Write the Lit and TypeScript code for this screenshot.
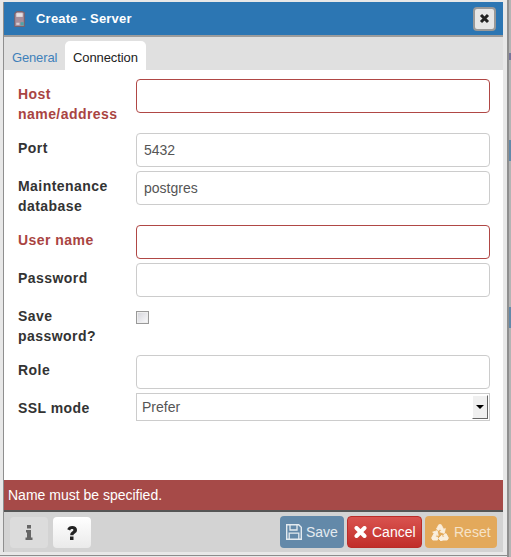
import { LitElement, html, css, svg } from "lit";
import { customElement } from "lit/decorators.js";

const RECYCLE_PART = svg`<path d="M-1.150 -9H1.150L3.750 -4.500 5.310 -5.400 4.290 -.770 -.230 -2.200 1.330 -3.100 0 -5.400 -1.080 -3.540 -3.500 -4.940Z"/>`;

@customElement("app-root")
export class AppRoot extends LitElement {
  static styles = css`
    :host { display: block; width: 511px; height: 557px; overflow: hidden; background: #e8e8e8; font-family: "Liberation Sans", Arial, sans-serif; }
    * { box-sizing: border-box; }
    .page { display: flex; height: 557px; }
    .shell { width: 507px; height: 556px; flex: none; padding: 2px 4px 3px 3px; border-bottom: 1px solid #8c8c8c; }
    .rail { width: 4px; height: 557px; flex: none; border-left: 2px solid #8f8f8f; background: #b4b4b4; display: flex; flex-direction: column; }
    .bit { flex: none; width: 2px; background: #6389a9; }
    .bit.p { background: #76769a; height: 7px; margin-top: 53px; }
    .bit.a { height: 21px; margin-top: 80px; }
    .bit.b { height: 21px; margin-top: 146px; }
    .dialog { width: 500px; height: 550px; border-left: 1px solid #8f8f8f; background: #fff; display: flex; flex-direction: column; }
    .head { height: 35px; flex: none; background: #2c76b3; border-bottom: 2px solid #9c9c9c; display: flex; align-items: center; padding: 0 7px 0 10px; color: #fff; font-weight: 700; font-size: 13px; letter-spacing: .22px; }
    .head svg { margin-right: 12px; flex: none; }
    .head span { flex: 1; }
    .close { width: 23px; height: 24px; border: 2px solid #999; border-radius: 4px; background: #e6e6e6; display: flex; align-items: center; justify-content: center; }
    .close svg { margin: 0; }
    .tabs { height: 33px; flex: none; background: #e0e0e0; display: flex; align-items: flex-end; padding-left: 1px; font-size: 13px; }
    .tab { height: 29px; width: 60px; padding: 3px 0 0 7px; display: flex; align-items: center; color: #3f80ba; letter-spacing: -.15px; }
    .tab.on { background: #fff; color: #222; border-radius: 5px 5px 0 0; padding-left: 8px; width: 81px; letter-spacing: -.1px; }
    .form { flex: 1; padding: 9px 13px 0 14px; display: flex; flex-direction: column; gap: 4px; }
    .row { display: grid; grid-template-columns: 118px 354px; min-height: 34px; }
    .lab { font-size: 14px; line-height: 20px; font-weight: 700; letter-spacing: .45px; color: #333; padding: 5px 12px 5px 0; }
    .req .lab { color: #a94442; }
    .inp { height: 34px; border: 1px solid #ccc; border-radius: 4px; font-size: 14px; color: #555; padding: 0 7px; display: flex; align-items: center; background: #fff; }
    .req .inp { border-color: #b04745; }
    .chk { width: 13px; height: 13px; margin-top: 10px; border: 1px solid #999; background: linear-gradient(135deg, #d4d4da, #fbfbfd); box-shadow: inset 0 0 0 1px #eee; }
    .select { height: 28px; border: 1px solid #ccc; display: flex; align-items: center; justify-content: space-between; font-size: 14px; color: #555; padding: 0 1px 0 5px; }
    .arrow { width: 16px; height: 24px; background: #f0f0f0; border: 1px solid; border-color: #fff #666 #666 #fff; display: flex; align-items: center; justify-content: center; }
    .tri { width: 0; height: 0; border: 4px solid transparent; border-top-color: #000; border-bottom: 0; }
    .err { height: 30px; flex: none; background: #a64a48; color: #fff; font-size: 14px; display: flex; align-items: center; padding-left: 4px; }
    .foot { height: 42px; flex: none; background: #d3d3d3; border-top: 2px solid #555; padding: 4px 6px 0 6px; display: flex; gap: 3px; font-size: 14px; }
    .sp { flex: 1; }
    .ib { width: 38px; height: 31px; margin-top: 1px; border-radius: 4px; background: linear-gradient(#fff, #eaeaea); display: flex; align-items: center; justify-content: center; }
    .ib.dis { background: #dcdcdc; margin-right: 2px; }
    .btn { height: 32px; border-radius: 4px; color: #fff; display: flex; align-items: center; padding-left: 6px; gap: 4px; }
    .save { width: 64px; background: #6389a9; color: #e4ebf0; }
    .cancel { width: 75px; background: linear-gradient(#d9534f, #c12e2a); border: 1px solid #b92c28; gap: 5px; }
    .reset { width: 72px; background: #e3a95b; color: #f6e3c8; gap: 5px; }
    .btn svg { flex: none; }
  `;

  private row(label: string, value = "", cls = "") {
    return html`<div class="row ${cls}"><div class="lab">${label}</div><div class="inp">${value}</div></div>`;
  }

  render() {
    return html`<div class="page">
      <div class="shell"><div class="dialog">
        <div class="head">
          <svg width="11" height="16" viewBox="0 0 10 15"><path d="M.5 2.500l2-2h5l2 1v13h-9z" fill="#a98f9c" stroke="#75626d"/><rect x="2" y="2" width="6" height="3.500" fill="#e6e0e3"/><rect x="6" y="10.500" width="3" height="3" fill="#4fa3a8"/><rect x="2" y="11" width="3" height="2" fill="#d9cfd4"/></svg>
          <span style="margin-left:-1px">Create - Server</span>
          <div class="close"><svg width="11" height="11" viewBox="0 0 11 11"><path d="M2 2l7 7m0-7l-7 7" stroke="#222" stroke-width="3"/></svg></div>
        </div>
        <div class="tabs"><div class="tab">General</div><div class="tab on">Connection</div></div>
        <div class="form">
          ${this.row("Host name/address", "", "req")}
          ${this.row("Port", "5432")}
          ${this.row("Maintenance database", "postgres")}
          ${this.row("User name", "", "req")}
          ${this.row("Password")}
          <div class="row"><div class="lab">Save password?</div><div><div class="chk"></div></div></div>
          ${this.row("Role")}
          <div class="row"><div class="lab">SSL mode</div><div class="select">Prefer<div class="arrow"><div class="tri"></div></div></div></div>
        </div>
        <div class="err">Name must be specified.</div>
        <div class="foot">
          <div class="ib dis"><svg width="8" height="15" viewBox="0 0 8 15"><path d="M2 0h4v3.500H2zM1 5h5v7.500h1.500V15H.5v-2.500H2V7.500H1z" fill="#666"/></svg></div>
          <div class="ib"><svg width="10" height="14" viewBox="0 0 10 14"><path d="M3 10.500h3.500V14H3zM.2 3.300C1 1.200 2.800 0 5.200 0 8 0 10 1.600 10 3.900c0 1.800-1 2.700-2.200 3.500-.9.600-1.300 1-1.300 1.900H3.200c0-1.900.7-2.800 2-3.700.8-.5 1.200-.9 1.200-1.500s-.5-1-1.300-1c-.9 0-1.500.5-2 1.400z" fill="#222"/></svg></div>
          <div class="sp"></div>
          <div class="btn save"><svg width="16" height="16" viewBox="0 0 16 16"><path d="M.7.700h12l2.600 2.600v12H.7z" fill="none" stroke="#e4ebf0" stroke-width="1.400"/><path d="M4 1v5h7V1M3.200 15V9.200h9.600V15" fill="none" stroke="#e4ebf0" stroke-width="1.300"/></svg>Save</div>
          <div class="btn cancel"><svg width="13" height="12" viewBox="0 0 13 12"><path d="M2.500 2l8 8m0-8l-8 8" stroke="#fff" stroke-width="4" stroke-linecap="round"/></svg>Cancel</div>
          <div class="btn reset"><svg width="18" height="17" viewBox="-9 -9.600 18 16" preserveAspectRatio="none" fill="#faeedd" stroke="#faeedd" stroke-width=".8" stroke-linejoin="round">${RECYCLE_PART}<g transform="rotate(120)">${RECYCLE_PART}</g><g transform="rotate(240)">${RECYCLE_PART}</g></svg>Reset</div>
        </div>
      </div></div>
      <div class="rail"><div class="bit p"></div><div class="bit a"></div><div class="bit b"></div></div>
    </div>`;
  }
}
